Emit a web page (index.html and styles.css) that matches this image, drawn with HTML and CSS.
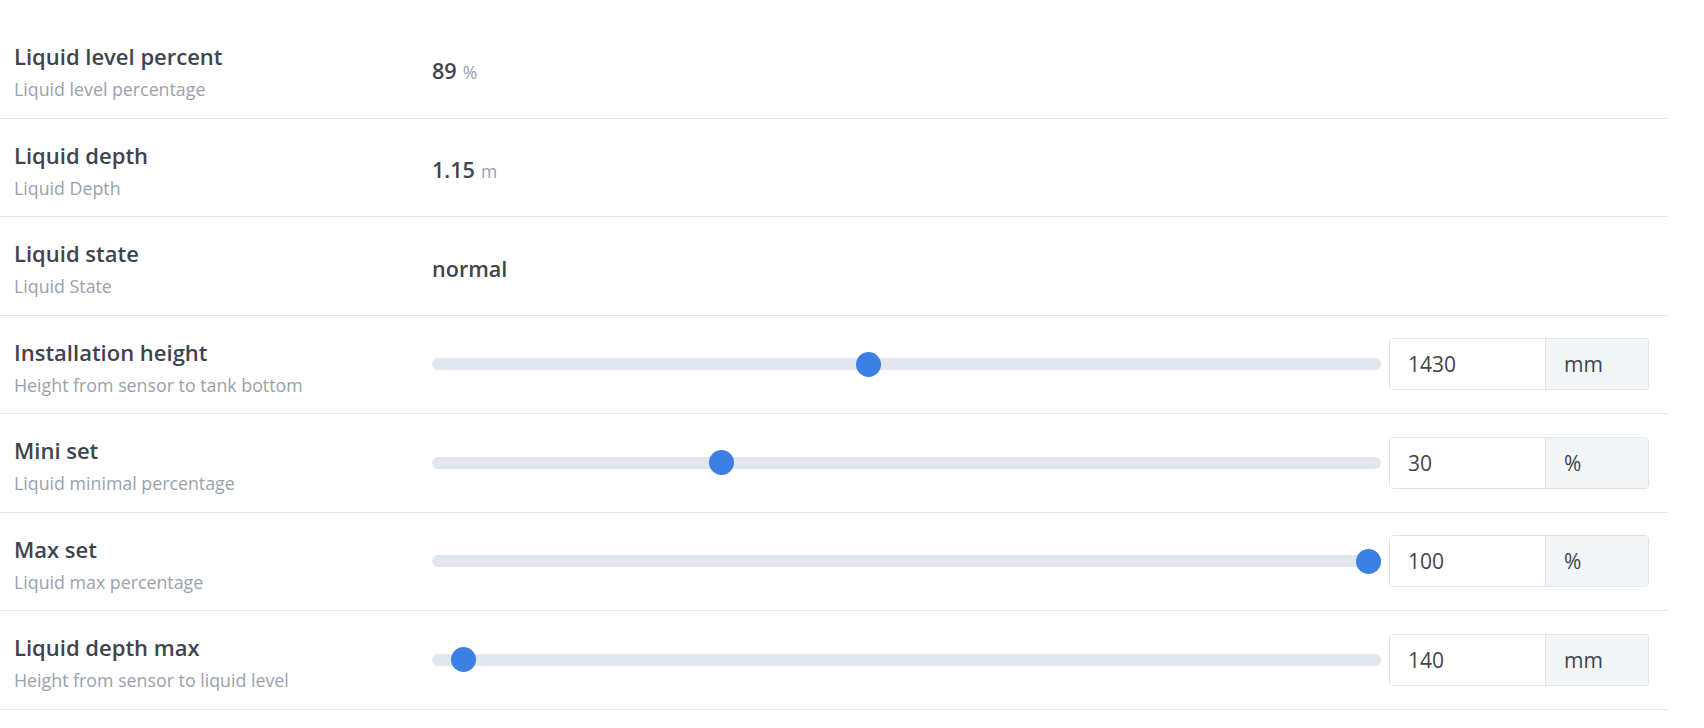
FILE: index.html
```html
<!DOCTYPE html>
<html lang="en">
<head>
    <meta charset="UTF-8">
    <meta name="viewport" content="width=device-width, initial-scale=1.0">
    <title>Liquid level sensor</title>
    <link rel="stylesheet" href="styles.css">
</head>
<body>
    <div class="settings">
        <div class="row">
            <div class="label">
                <div class="title">Liquid level percent</div>
                <div class="desc">Liquid level percentage</div>
            </div>
            <div class="value">89<span class="unit">%</span></div>
        </div>
        <div class="row">
            <div class="label">
                <div class="title">Liquid depth</div>
                <div class="desc">Liquid Depth</div>
            </div>
            <div class="value">1.15<span class="unit">m</span></div>
        </div>
        <div class="row">
            <div class="label">
                <div class="title">Liquid state</div>
                <div class="desc">Liquid State</div>
            </div>
            <div class="value">normal</div>
        </div>
        <div class="row">
            <div class="label">
                <div class="title">Installation height</div>
                <div class="desc">Height from sensor to tank bottom</div>
            </div>
            <div class="control">
                <input type="range" class="slider" min="100" max="3000" value="1430">
                <div class="input-group">
                    <input type="text" class="number" value="1430">
                    <span class="addon">mm</span>
                </div>
            </div>
        </div>
        <div class="row">
            <div class="label">
                <div class="title">Mini set</div>
                <div class="desc">Liquid minimal percentage</div>
            </div>
            <div class="control">
                <input type="range" class="slider" min="0" max="100" value="30">
                <div class="input-group">
                    <input type="text" class="number" value="30">
                    <span class="addon">%</span>
                </div>
            </div>
        </div>
        <div class="row">
            <div class="label">
                <div class="title">Max set</div>
                <div class="desc">Liquid max percentage</div>
            </div>
            <div class="control">
                <input type="range" class="slider" min="0" max="100" value="100">
                <div class="input-group">
                    <input type="text" class="number" value="100">
                    <span class="addon">%</span>
                </div>
            </div>
        </div>
        <div class="row">
            <div class="label">
                <div class="title">Liquid depth max</div>
                <div class="desc">Height from sensor to liquid level</div>
            </div>
            <div class="control">
                <input type="range" class="slider" min="100" max="2000" value="140">
                <div class="input-group">
                    <input type="text" class="number" value="140">
                    <span class="addon">mm</span>
                </div>
            </div>
        </div>
    </div>
</body>
</html>
```
FILE: styles.css
```css
body {
    margin: 0;
    font-family: "Open Sans", "Noto Sans", sans-serif;
    color: #3f4451;
    background-color: #fff;
}
.settings {
    width: 1667px;
    padding-top: 20px;
}
.row {
    display: flex;
    align-items: center;
    height: 98.5px;
    box-sizing: border-box;
    padding-left: 14px;
    border-bottom: 1px solid #e2e7ee;
}
.label {
    width: 418px;
    padding-top: 6px;
}
.title {
    font-size: 22px;
    font-weight: 600;
    line-height: 30px;
}
.desc {
    margin-top: 5px;
    font-size: 17.8px;
    line-height: 26px;
    color: #9aa1ad;
}
.value {
    padding-top: 6px;
    font-size: 21.6px;
    font-weight: 600;
    line-height: 30px;
}
.unit {
    margin-left: 6px;
    font-size: 17.5px;
    font-weight: 400;
    color: #96a2b2;
}
.control {
    flex: 1;
    display: flex;
    align-items: center;
    gap: 8px;
    padding-right: 18px;
}
.slider {
    flex: 1;
    margin: 0;
    height: 12px;
    border-radius: 6px;
    background-color: #e2e7ef;
    -webkit-appearance: none;
    appearance: none;
    outline: none;
}
.slider::-webkit-slider-thumb {
    -webkit-appearance: none;
    width: 25px;
    height: 25px;
    border-radius: 50%;
    background-color: #3b80e2;
    border: none;
    cursor: pointer;
}
.input-group {
    display: flex;
    width: 260px;
    height: 52px;
    box-sizing: border-box;
    border: 1px solid #dee4eb;
    border-radius: 4px;
    overflow: hidden;
}
.number {
    width: 155px;
    box-sizing: border-box;
    border: none;
    padding: 0 18px;
    font-family: inherit;
    font-size: 21px;
    color: #3f4451;
    outline: none;
}
.addon {
    flex: 1;
    display: flex;
    align-items: center;
    padding: 0 18px;
    border-left: 1px solid #dee4eb;
    background-color: #f3f6f9;
    font-size: 21px;
}
```
